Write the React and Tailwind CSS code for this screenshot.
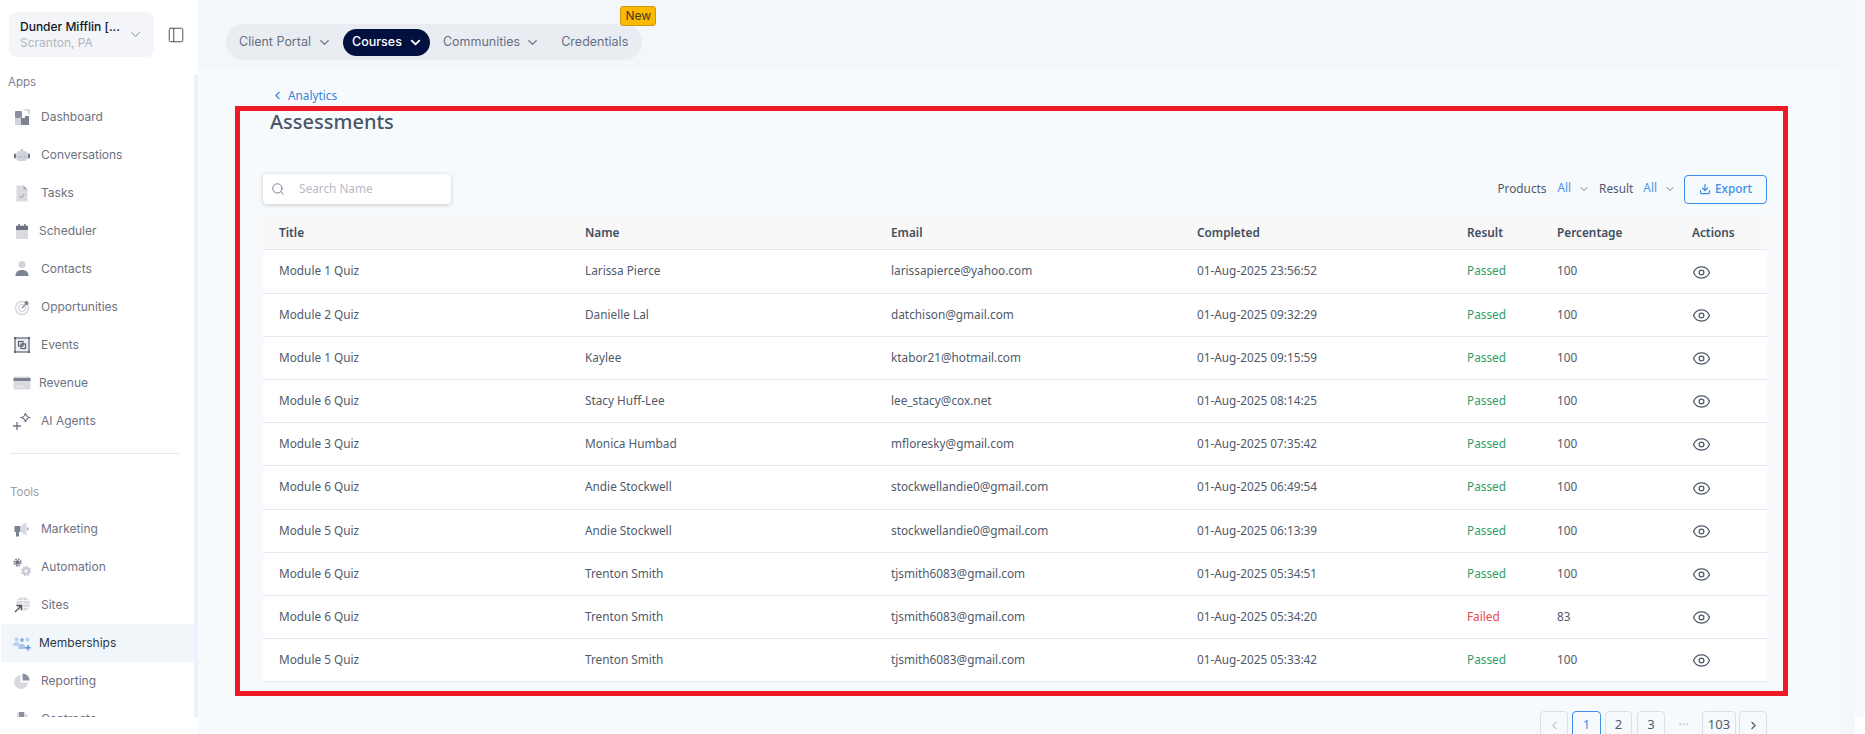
import { Search, ChevronDown, ChevronLeft, ChevronRight, Eye, Download, PanelLeft } from "lucide-react";

const rows = [
  ["Module 1 Quiz", "Larissa Pierce", "larissapierce@yahoo.com", "01-Aug-2025 23:56:52", "Passed", "100"],
  ["Module 2 Quiz", "Danielle Lal", "datchison@gmail.com", "01-Aug-2025 09:32:29", "Passed", "100"],
  ["Module 1 Quiz", "Kaylee", "ktabor21@hotmail.com", "01-Aug-2025 09:15:59", "Passed", "100"],
  ["Module 6 Quiz", "Stacy Huff-Lee", "lee_stacy@cox.net", "01-Aug-2025 08:14:25", "Passed", "100"],
  ["Module 3 Quiz", "Monica Humbad", "mfloresky@gmail.com", "01-Aug-2025 07:35:42", "Passed", "100"],
  ["Module 6 Quiz", "Andie Stockwell", "stockwellandie0@gmail.com", "01-Aug-2025 06:49:54", "Passed", "100"],
  ["Module 5 Quiz", "Andie Stockwell", "stockwellandie0@gmail.com", "01-Aug-2025 06:13:39", "Passed", "100"],
  ["Module 6 Quiz", "Trenton Smith", "tjsmith6083@gmail.com", "01-Aug-2025 05:34:51", "Passed", "100"],
  ["Module 6 Quiz", "Trenton Smith", "tjsmith6083@gmail.com", "01-Aug-2025 05:34:20", "Failed", "83"],
  ["Module 5 Quiz", "Trenton Smith", "tjsmith6083@gmail.com", "01-Aug-2025 05:33:42", "Passed", "100"],
];

// small two-tone sidebar icons
const icons = {
  dashboard: (
    <>
      <rect x="2" y="3" width="7" height="7" rx="1" fill="#8b90a0" />
      <rect x="2" y="10" width="6" height="7" fill="#d0d3da" />
      <path d="M8 10h4V8h4v9H8z" fill="#7d8292" />
      <path d="M11.500 2H16v4" fill="none" stroke="#c9ccd4" strokeWidth="1.500" />
    </>
  ),
  conversations: (
    <>
      <rect x="3" y="5" width="12" height="10" rx="4" fill="#d0d3da" />
      <rect x="1" y="7.500" width="2" height="5" rx="1" fill="#6d7283" />
      <rect x="15" y="7.500" width="2" height="5" rx="1" fill="#6d7283" />
      <circle cx="9" cy="4" r="1" fill="#a6aab6" />
      <path d="M6 11h.9M8.600 11h.9M11.200 11h.9" stroke="#7d8292" strokeWidth="1" />
    </>
  ),
  tasks: (
    <>
      <path d="M3.500 1.500h7l4 4v12h-11z" fill="#d8dae0" />
      <path d="M10.500 1.500l4 4h-4z" fill="#a6aab6" />
      <path d="M6.500 12l2 2 3-4" fill="none" stroke="#9297a6" strokeWidth="1" />
    </>
  ),
  scheduler: (
    <>
      <rect x="3" y="3" width="12" height="14" rx="1" fill="#d8dae0" />
      <rect x="3" y="4" width="12" height="4" fill="#6d7283" />
      <path d="M6 2v3M12 2v3" stroke="#6d7283" strokeWidth="1.500" />
    </>
  ),
  contacts: (
    <>
      <circle cx="9" cy="4.500" r="3.500" fill="#d0d3da" />
      <path d="M2.500 16c0-4 2.500-6 6.500-6s6.500 2 6.500 6z" fill="#7d8292" />
    </>
  ),
  opportunities: (
    <>
      <circle cx="9" cy="10" r="6.500" fill="none" stroke="#d8dae0" strokeWidth="1.500" />
      <circle cx="9" cy="10" r="3.500" fill="none" stroke="#d8dae0" strokeWidth="1.500" />
      <path d="M9 10l5-5" stroke="#8b90a0" strokeWidth="1.200" />
      <circle cx="13.500" cy="5" r="2" fill="#7d8292" />
    </>
  ),
  events: (
    <>
      <rect x="2" y="2" width="14" height="14" fill="#eceef1" stroke="#5d6272" strokeWidth="1.200" />
      <rect x="5.500" y="5.500" width="4.500" height="4.500" fill="none" stroke="#5d6272" strokeWidth="1.200" />
      <rect x="8" y="8" width="4.500" height="4.500" fill="none" stroke="#5d6272" strokeWidth="1.200" />
      <path d="M1 1h2v2H1zM15 1h2v2h-2zM1 15h2v2H1zM15 15h2v2h-2z" fill="#5d6272" />
    </>
  ),
  revenue: (
    <>
      <rect x="0.500" y="2.500" width="17" height="13" rx="1.500" fill="#d8dae0" />
      <rect x="0.500" y="4" width="17" height="3" fill="#7d8292" />
      <path d="M3.500 12.500h3M8.500 12.500h2" stroke="#f2f3f5" strokeWidth="1" />
    </>
  ),
  agents: (
    <>
      <path d="M0 14h8M4 10v8" stroke="#6d7283" strokeWidth="1.300" />
      <path d="M12.500 1c.4 2.600 1.500 3.800 4 4.500-2.500.7-3.600 1.900-4 4.500-.4-2.600-1.500-3.800-4-4.500 2.500-.7 3.600-1.900 4-4.500z" fill="none" stroke="#6d7283" strokeWidth="1.200" />
    </>
  ),
  marketing: (
    <>
      <path d="M1.500 6h6v6h-6z" fill="#7d8292" />
      <path d="M7.500 6l6-4v14l-6-4z" fill="#d8dae0" />
      <rect x="3" y="12" width="3" height="4.500" fill="#7d8292" />
      <rect x="14" y="7.500" width="1.500" height="3" fill="#a6aab6" />
    </>
  ),
  automation: (
    <>
      <circle cx="4.500" cy="4.500" r="2.300" fill="#6d7283" />
      <circle cx="4.500" cy="4.500" r="3.400" fill="none" stroke="#6d7283" strokeWidth="1.500" strokeDasharray="1.500 1.170" />
      <circle cx="13" cy="13" r="2.800" fill="none" stroke="#c9ccd4" strokeWidth="2.400" />
      <circle cx="13" cy="13" r="4.500" fill="none" stroke="#c9ccd4" strokeWidth="1.500" strokeDasharray="1.800 1.730" />
    </>
  ),
  sites: (
    <>
      <circle cx="10" cy="8" r="7" fill="#d8dae0" />
      <path d="M3 8h14M10 1v14M4 4.500h12M4 11.500h12" stroke="#fff" strokeWidth="0.700" />
      <path d="M2 16l6-6M3.500 9.500h5V14" fill="none" stroke="#4f5464" strokeWidth="1.400" />
    </>
  ),
  memberships: (
    <>
      <circle cx="3.500" cy="5.500" r="2" fill="#b7cff0" />
      <circle cx="9" cy="6" r="2" fill="#8fb5ea" />
      <circle cx="14.500" cy="5.500" r="2" fill="#b7cff0" />
      <path d="M0 12c0-3 1.500-4 3.500-4S7 9 7 12z" fill="#b7cff0" />
      <path d="M5 15c0-3 2-5 4-5s4 2 4 5z" fill="#a9c5ec" />
      <path d="M15 11v5.500M12.300 13.700h5.400" stroke="#5b8fdc" strokeWidth="1.500" />
    </>
  ),
  reporting: (
    <>
      <path d="M7.500 3a7 7 0 1 0 7.500 7.500H7.500z" fill="#d8dae0" />
      <path d="M9.500 1.500a7 7 0 0 1 7 7h-7z" fill="#8b90a0" />
    </>
  ),
  contracts: (
    <>
      <path d="M4 2h7l4 4v11H4z" fill="#d8dae0" />
      <rect x="6" y="2" width="5" height="5" fill="#8b90a0" />
    </>
  ),
};

const apps = [
  ["Dashboard", "dashboard"],
  ["Conversations", "conversations"],
  ["Tasks", "tasks"],
  ["Scheduler", "scheduler"],
  ["Contacts", "contacts"],
  ["Opportunities", "opportunities"],
  ["Events", "events"],
  ["Revenue", "revenue"],
  ["AI Agents", "agents"],
];

const tools = [
  ["Marketing", "marketing"],
  ["Automation", "automation"],
  ["Sites", "sites"],
  ["Memberships", "memberships", true],
  ["Reporting", "reporting"],
  ["Contracts", "contracts"],
];

function NavItem({ label, icon, active, narrow }) {
  return (
    <div className={`ml-[1px] flex h-[38px] shrink-0 items-center pl-[12px] ${active ? "bg-[#f1f6fa] text-[#2d3648]" : "text-[#6d7280]"}`}>
      <svg width="18" height="18" viewBox="0 0 18 18" className="shrink-0">
        {icons[icon]}
      </svg>
      <span className={`text-[12px] ${narrow ? "ml-[8px]" : "ml-[10px]"}`}>{label}</span>
    </div>
  );
}

function Sidebar() {
  return (
    <aside className="flex h-[717px] w-[198px] shrink-0 bg-white font-['Inter',sans-serif]">
      <div className="flex w-[194px] flex-col overflow-hidden">
        <div className="flex items-center pl-[9px] pt-[12px]">
          <div className="flex h-[45px] w-[145px] items-center justify-between rounded-[8px] bg-[#f3f5f8] pl-[11px] pr-[11px]">
            <div className="leading-[16px]">
              <div className="text-[12px] font-medium text-[#101828]">Dunder Mifflin [...</div>
              <div className="text-[12px] text-[#b0b5bf]">Scranton, PA</div>
            </div>
            <ChevronDown size={15} strokeWidth={1.300} className="text-[#667085]" />
          </div>
          <PanelLeft size={18} strokeWidth={1.200} className="ml-[13px] text-[#344054]" />
        </div>
        <div className="mt-[17px] pl-[8px] text-[11.500px] leading-[16px] text-[#7d8290]">Apps</div>
        <div className="mt-[8px] flex flex-col">
          {apps.map(([label, icon]) => (
            <NavItem key={label} label={label} icon={icon} narrow={label === "Scheduler" || label === "Revenue"} />
          ))}
        </div>
        <div className="ml-[10px] mr-[15px] mt-[13px] border-t border-[#e4e7ec]" />
        <div className="mt-[30px] pl-[10px] text-[11.500px] leading-[16px] text-[#9aa0ab]">Tools</div>
        <div className="mt-[10px] flex flex-col">
          {tools.map(([label, icon, active]) => (
            <NavItem key={label} label={label} icon={icon} active={active} narrow={active} />
          ))}
        </div>
      </div>
      <div className="mt-[75px] w-[4px] bg-[#eef1fd]" />
    </aside>
  );
}

function TopTabs() {
  return (
    <header className="flex h-[68px] items-start bg-[#f3f7fa] pl-[28px] pt-[24px] font-['Inter',sans-serif]">
      <div className="relative flex h-[36px] items-center rounded-full bg-[#e9edf2] pl-[5px] pr-[14px] text-[12.500px] text-[#667085]">
        <span className="flex items-center pl-[8px]">
          Client Portal
          <ChevronDown size={15} strokeWidth={2} className="ml-[6px]" />
        </span>
        <span className="ml-[11px] flex h-[27px] items-center rounded-full bg-[#021040] pl-[9px] pr-[7px] font-medium text-white">
          Courses
          <ChevronDown size={15} strokeWidth={3} className="ml-[6px]" />
        </span>
        <span className="ml-[13px] flex items-center">
          Communities
          <ChevronDown size={15} strokeWidth={2} className="ml-[5px]" />
        </span>
        <span className="ml-[21px]">Credentials</span>
        <span className="absolute right-[-14px] top-[-18px] flex h-[20px] w-[36px] items-center justify-center rounded-[3px] border border-[#c79a10] bg-[#fdb900] text-[12px] text-[#3d3a20]">
          New
        </span>
      </div>
    </header>
  );
}

function PageBtn({ children, active, muted, w }) {
  return (
    <span
      className={`flex h-[29px] shrink-0 items-center justify-center rounded-[4px] border ${w} ${
        active ? "border-[#3b8eea] text-[#3b8eea]" : muted ? "border-[#dcdfe4] text-[#c0c4cc]" : "border-[#dcdfe4]"
      }`}
    >
      {children}
    </span>
  );
}

function Assessments() {
  return (
    <div className="relative flex-1 bg-[#f6fafd] pl-[65px] pr-[73px] font-['Noto_Sans',sans-serif]">
      <div className="flex items-center pl-[8px] pt-[18px] text-[11.800px] leading-[18px] text-[#3b82d6]">
        <ChevronLeft size={13} strokeWidth={2} className="mr-[4px]" />
        Analytics
      </div>
      <h1 className="mt-[4px] pl-[7px] text-[20px] font-medium leading-[28px] text-[#4a5568]">Assessments</h1>

      <div className="mt-[38px] flex items-center justify-between">
        <div className="flex h-[30px] w-[188px] items-center rounded-[4px] bg-white pl-[8px] shadow-[0_1px_4px_rgba(0,0,0,0.2)]">
          <Search size={14} strokeWidth={1.500} className="text-[#667085]" />
          <span className="ml-[14px] text-[11.800px] text-[#b6bcc6]">Search Name</span>
        </div>
        <div className="flex items-center text-[11.800px] text-[#505a6b]">
          <span>Products</span>
          <span className="ml-[11px] -translate-y-[1px] text-[#4d94e8]">All</span>
          <ChevronDown size={12} strokeWidth={1.500} className="ml-[7px]" />
          <span className="ml-[9px]">Result</span>
          <span className="ml-[10px] -translate-y-[1px] text-[#4d94e8]">All</span>
          <ChevronDown size={12} strokeWidth={1.500} className="ml-[7px]" />
          <span className="ml-[8px] flex h-[29px] w-[83px] items-center justify-center rounded-[4px] border border-[#3b8eea] font-medium text-[#3b8eea]">
            <Download size={12} strokeWidth={2.500} className="mr-[4px]" />
            Export
          </span>
        </div>
      </div>

      <table className="mt-[11px] w-[1504px] table-fixed text-left text-[11.800px] text-[#505a6b]">
        <thead>
          <tr className="h-[34px] border-b border-[#e6e8eb] bg-[#f8f8f8] text-[#414d60]">
            <th className="w-[306px] pl-[16px] pt-[2px] font-semibold">Title</th>
            <th className="w-[306px] pl-[16px] pt-[2px] font-semibold">Name</th>
            <th className="w-[306px] pl-[16px] pt-[2px] font-semibold">Email</th>
            <th className="w-[270px] pl-[16px] pt-[2px] font-semibold">Completed</th>
            <th className="w-[90px] pl-[16px] pt-[2px] font-semibold">Result</th>
            <th className="w-[135px] pl-[16px] pt-[2px] font-semibold">Percentage</th>
            <th className="pl-[16px] pt-[2px] font-semibold">Actions</th>
          </tr>
        </thead>
        <tbody className="bg-white">
          {rows.map((r, i) => (
            <tr key={i} className={`border-b border-[#e6e8eb] ${i === 0 || i === 5 ? "h-[44px]" : "h-[43px]"}`}>
              <td className="pl-[16px]">{r[0]}</td>
              <td className="pl-[16px]">{r[1]}</td>
              <td className="pl-[16px]">{r[2]}</td>
              <td className="pl-[16px]">{r[3]}</td>
              <td className={`pl-[16px] ${r[4] === "Failed" ? "text-[#e5484d]" : "text-[#2f9e6b]"}`}>{r[4]}</td>
              <td className="pl-[16px]">{r[5]}</td>
              <td className="pl-[16px]">
                <Eye size={19} strokeWidth={1.600} className="translate-y-[1px] text-[#505a6b]" />
              </td>
            </tr>
          ))}
        </tbody>
      </table>

      <div className="mt-[29px] flex items-start justify-end text-[13px] text-[#505a6b]">
        <PageBtn muted w="w-[28px]">
          <ChevronLeft size={13} />
        </PageBtn>
        <span className="ml-[4px]" />
        <PageBtn active w="w-[29px]">1</PageBtn>
        <span className="ml-[4px]" />
        <PageBtn w="w-[27px]">2</PageBtn>
        <span className="ml-[5px]" />
        <PageBtn w="w-[28px]">3</PageBtn>
        <span className="flex h-[29px] w-[37px] items-center justify-center text-[#c0c4cc]">···</span>
        <PageBtn w="w-[34px]">103</PageBtn>
        <span className="ml-[3px]" />
        <PageBtn w="w-[28px]">
          <ChevronRight size={13} />
        </PageBtn>
      </div>

      {/* red annotation frame */}
      <div className="absolute left-[37px] top-[38px] h-[590px] w-[1553px] border-[5px] border-[#ed1c24]" />
    </div>
  );
}

export default function App() {
  return (
    <div className="flex h-[734px] w-full overflow-hidden bg-white">
      <Sidebar />
      <main className="flex w-[1657px] shrink-0 flex-col">
        <TopTabs />
        <div className="flex flex-1 overflow-hidden">
          <Assessments />
          <div className="w-[16px] bg-[#f3f7fa]" />
        </div>
      </main>
      <div className="h-[717px] flex-1 bg-[#f6fafd]" />
    </div>
  );
}
